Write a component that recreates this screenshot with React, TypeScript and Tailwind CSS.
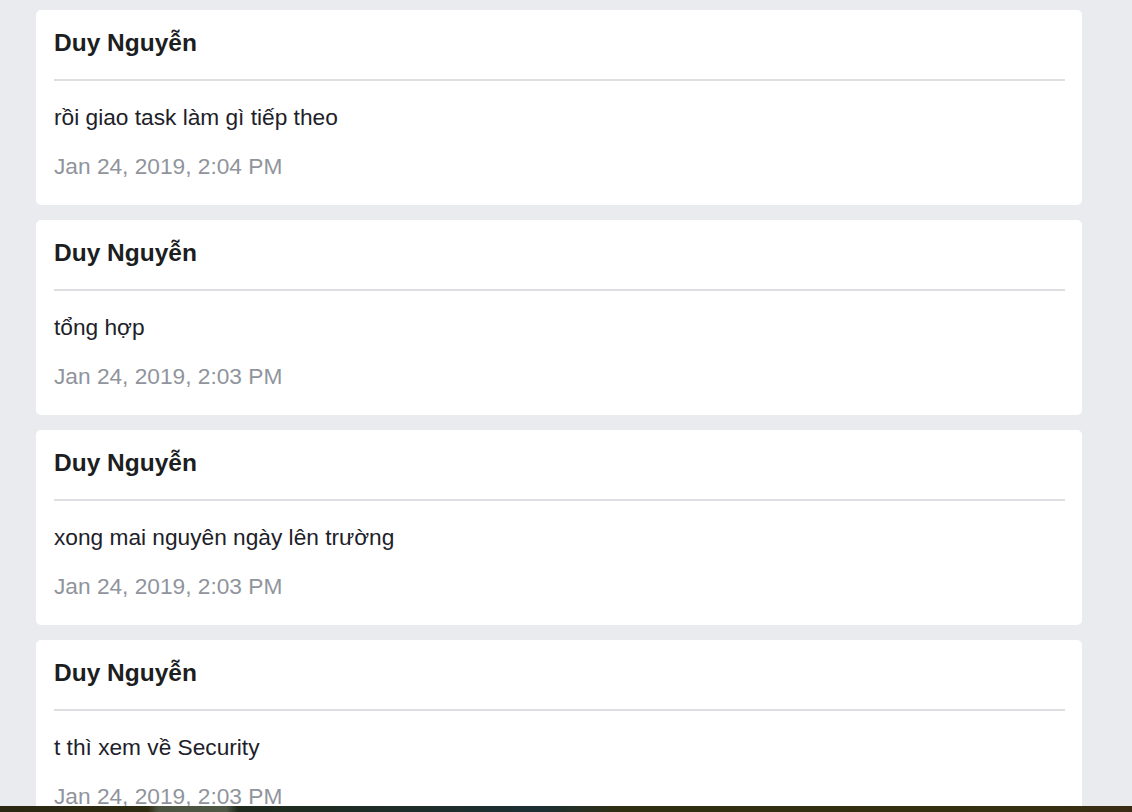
const messages = [
  { author: "Duy Nguyễn", text: "rồi giao task làm gì tiếp theo", time: "Jan 24, 2019, 2:04 PM" },
  { author: "Duy Nguyễn", text: "tổng hợp", time: "Jan 24, 2019, 2:03 PM" },
  { author: "Duy Nguyễn", text: "xong mai nguyên ngày lên trường", time: "Jan 24, 2019, 2:03 PM" },
  { author: "Duy Nguyễn", text: "t thì xem về Security", time: "Jan 24, 2019, 2:03 PM" },
];

function MessageCard({ author, text, time }: { author: string; text: string; time: string }) {
  return (
    <div className="rounded-[5px] bg-white pl-[18px] pr-[17px] pt-[15px] pb-[22px]">
      <h3 className="text-[24.5px] font-bold leading-[36px] text-[#1c1e21]">{author}</h3>
      <div className="mt-[18px] h-[2px] bg-[#dddfe2]" />
      <p className="mt-[19px] text-[22.7px] leading-[34px] text-[#1d2129]">{text}</p>
      <p className="mt-[15px] text-[22.7px] leading-[34px] text-[#90949c]">{time}</p>
    </div>
  );
}

export default function App() {
  return (
    <div
      className="min-h-screen bg-[#e9ebee] pt-[10px] pb-[20px]"
      style={{ fontFamily: '"Liberation Sans", Arial, sans-serif' }}
    >
      <div className="ml-[36px] flex w-[1046px] flex-col gap-[15px]">
        {messages.map((m, i) => (
          <MessageCard key={i} {...m} />
        ))}
      </div>
      {/* desktop strip showing at the bottom edge */}
      <div className="fixed bottom-0 left-0 h-[6px] w-full bg-[linear-gradient(90deg,#2a2812_0%,#2d2b10_13%,#4b5440_14%,#4e5644_20%,#1e2a1c_21%,#1c2f33_48%,#2f2e10_55%,#35300f_90%,#3a2c14_100%)]" />
    </div>
  );
}
